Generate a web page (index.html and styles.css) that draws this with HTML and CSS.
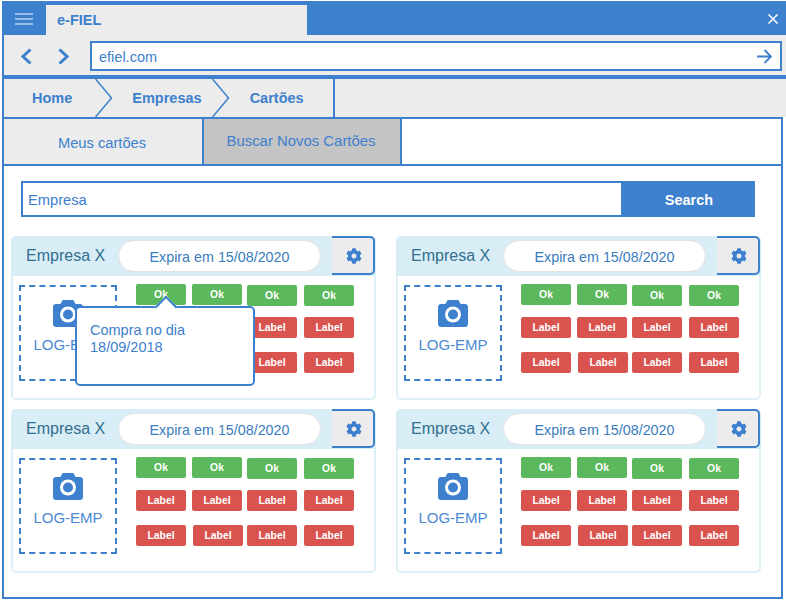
FILE: index.html
```html
<!DOCTYPE html>
<html lang="en">
<head>
    <meta charset="UTF-8">
    <meta name="viewport" content="width=device-width, initial-scale=1.0">
    <title>e-FIEL</title>
    <link rel="stylesheet" href="styles.css">
</head>
<body>
    <svg class="sprites" width="0" height="0">
        <symbol id="gear" viewBox="0 0 512 512">
            <path d="M487.4 315.7l-42.6-24.6c4.3-23.2 4.3-47 0-70.2l42.6-24.6c4.9-2.8 7.1-8.6 5.5-14-11.1-35.6-30-67.8-54.7-94.6-3.8-4.1-10-5.1-14.8-2.3L380.8 110c-17.9-15.4-38.5-27.3-60.8-35.1V25.8c0-5.6-3.9-10.5-9.4-11.7-36.7-8.2-74.3-7.8-109.2 0-5.5 1.2-9.4 6.1-9.4 11.7V75c-22.2 7.9-42.8 19.8-60.8 35.1L88.7 85.5c-4.9-2.8-11-1.9-14.8 2.3-24.7 26.7-43.6 58.9-54.7 94.6-1.7 5.4.6 11.2 5.5 14L67.3 221c-4.3 23.2-4.3 47 0 70.2l-42.6 24.6c-4.9 2.8-7.1 8.6-5.5 14 11.1 35.6 30 67.8 54.7 94.6 3.8 4.1 10 5.1 14.8 2.3l42.6-24.6c17.9 15.4 38.5 27.3 60.8 35.1v49.2c0 5.6 3.9 10.5 9.4 11.7 36.7 8.2 74.3 7.8 109.2 0 5.5-1.2 9.4-6.1 9.4-11.7v-49.2c22.2-7.9 42.8-19.8 60.8-35.1l42.6 24.6c4.9 2.8 11 1.9 14.8-2.3 24.7-26.7 43.6-58.9 54.7-94.6 1.5-5.5-.7-11.3-5.6-14.1zM256 336c-44.1 0-80-35.9-80-80s35.9-80 80-80 80 35.9 80 80-35.9 80-80 80z"/>
        </symbol>
        <symbol id="camera" viewBox="0 0 30 27">
            <path d="M3 4h4.5l1.2-2.6C9.2.5 10 0 11 0h8c1 0 1.8.5 2.3 1.4L22.500 4H27c1.700 0 3 1.300 3 3v17c0 1.700-1.300 3-3 3H3c-1.700 0-3-1.300-3-3V7c0-1.700 1.300-3 3-3z"/>
            <circle cx="15" cy="14.500" r="8" fill="#fff"/>
            <circle cx="15" cy="14.500" r="5"/>
        </symbol>
    </svg>

    <div class="window">
        <div class="titlebar">
            <svg class="menu-icon" width="18" height="14" viewBox="0 0 18 14">
                <path d="M0 2h18M0 7h18M0 12h18" stroke="#b5cfee" stroke-width="1.500" fill="none"/>
            </svg>
            <div class="app-tab">e-FIEL</div>
            <svg class="close-icon" width="10" height="10" viewBox="0 0 10 10">
                <path d="M0.500 0.500l9 9M9.500 0.500l-9 9" stroke="#fff" stroke-width="1.500" fill="none"/>
            </svg>
        </div>

        <div class="addressbar">
            <svg class="nav-icon" width="11" height="17" viewBox="0 0 11 17">
                <path d="M9.500 1.500L2 8.500l7.500 7" stroke="#3d80ce" stroke-width="3" fill="none"/>
            </svg>
            <svg class="nav-icon" width="11" height="17" viewBox="0 0 11 17">
                <path d="M1.500 1.500L9 8.500l-7.500 7" stroke="#3d80ce" stroke-width="3" fill="none"/>
            </svg>
            <div class="url">
                <span>efiel.com</span>
                <svg width="15" height="15" viewBox="0 0 15 15">
                    <path d="M0 7.500h14M7.500 1l6.500 6.500L7.500 14" stroke="#3d80ce" stroke-width="1.800" fill="none"/>
                </svg>
            </div>
        </div>

        <nav class="crumbs">
            <a class="crumb crumb-home">Home</a>
            <svg class="crumb-sep" width="18" height="38" viewBox="0 0 18 38">
                <path d="M0.500 0l16 19-16 19" stroke="#3d80ce" stroke-width="1.500" fill="none"/>
            </svg>
            <a class="crumb crumb-mid">Empresas</a>
            <svg class="crumb-sep" width="18" height="38" viewBox="0 0 18 38">
                <path d="M0.500 0l16 19-16 19" stroke="#3d80ce" stroke-width="1.500" fill="none"/>
            </svg>
            <a class="crumb crumb-last">Cartões</a>
        </nav>

        <div class="frame">
            <div class="tabs">
                <div class="tab">Meus cartões</div>
                <div class="tab tab-active">Buscar Novos Cartões</div>
            </div>

            <div class="search">
                <div class="search-input">Empresa</div>
                <div class="search-btn">Search</div>
            </div>

            <div class="cards">
                <div class="card">
                    <div class="card-head">
                        <span class="company">Empresa X</span>
                        <span class="expires">Expira em 15/08/2020</span>
                        <span class="gear"><svg width="16" height="16"><use href="#gear"/></svg></span>
                    </div>
                    <div class="card-body">
                        <div class="logo">
                            <svg width="30" height="27"><use href="#camera"/></svg>
                            <span>LOG-EMP</span>
                        </div>
                        <div class="labels">
                            <span class="label ok up">Ok</span><span class="label ok up">Ok</span><span class="label ok">Ok</span><span class="label ok">Ok</span>
                            <span class="label bad">Label</span><span class="label bad">Label</span><span class="label bad">Label</span><span class="label bad">Label</span>
                            <span class="label bad">Label</span><span class="label bad nudge">Label</span><span class="label bad">Label</span><span class="label bad">Label</span>
                        </div>
                    </div>
                    <div class="tooltip">Compra no dia<br>18/09/2018</div>
                </div>

                <div class="card">
                    <div class="card-head">
                        <span class="company">Empresa X</span>
                        <span class="expires">Expira em 15/08/2020</span>
                        <span class="gear"><svg width="16" height="16"><use href="#gear"/></svg></span>
                    </div>
                    <div class="card-body">
                        <div class="logo">
                            <svg width="30" height="27"><use href="#camera"/></svg>
                            <span>LOG-EMP</span>
                        </div>
                        <div class="labels">
                            <span class="label ok up">Ok</span><span class="label ok up">Ok</span><span class="label ok">Ok</span><span class="label ok">Ok</span>
                            <span class="label bad">Label</span><span class="label bad">Label</span><span class="label bad">Label</span><span class="label bad">Label</span>
                            <span class="label bad">Label</span><span class="label bad nudge">Label</span><span class="label bad">Label</span><span class="label bad">Label</span>
                        </div>
                    </div>
                </div>

                <div class="card">
                    <div class="card-head">
                        <span class="company">Empresa X</span>
                        <span class="expires">Expira em 15/08/2020</span>
                        <span class="gear"><svg width="16" height="16"><use href="#gear"/></svg></span>
                    </div>
                    <div class="card-body">
                        <div class="logo">
                            <svg width="30" height="27"><use href="#camera"/></svg>
                            <span>LOG-EMP</span>
                        </div>
                        <div class="labels">
                            <span class="label ok up">Ok</span><span class="label ok up">Ok</span><span class="label ok">Ok</span><span class="label ok">Ok</span>
                            <span class="label bad">Label</span><span class="label bad">Label</span><span class="label bad">Label</span><span class="label bad">Label</span>
                            <span class="label bad">Label</span><span class="label bad nudge">Label</span><span class="label bad">Label</span><span class="label bad">Label</span>
                        </div>
                    </div>
                </div>

                <div class="card">
                    <div class="card-head">
                        <span class="company">Empresa X</span>
                        <span class="expires">Expira em 15/08/2020</span>
                        <span class="gear"><svg width="16" height="16"><use href="#gear"/></svg></span>
                    </div>
                    <div class="card-body">
                        <div class="logo">
                            <svg width="30" height="27"><use href="#camera"/></svg>
                            <span>LOG-EMP</span>
                        </div>
                        <div class="labels">
                            <span class="label ok up">Ok</span><span class="label ok up">Ok</span><span class="label ok">Ok</span><span class="label ok">Ok</span>
                            <span class="label bad">Label</span><span class="label bad">Label</span><span class="label bad">Label</span><span class="label bad">Label</span>
                            <span class="label bad">Label</span><span class="label bad nudge">Label</span><span class="label bad">Label</span><span class="label bad">Label</span>
                        </div>
                    </div>
                </div>
            </div>
        </div>
    </div>
</body>
</html>
```

FILE: styles.css
```css
* {
    box-sizing: border-box;
}
html, body {
    height: 100%;
}
body {
    font-family: "Liberation Sans", Arial, sans-serif;
    font-size: 14.5px;
    margin: 0;
    color: #3d80ce;
    background: #fff;
    overflow: hidden;
}
.sprites {
    display: block;
    height: 0;
}
.window {
    display: flex;
    flex-direction: column;
    height: 598px;
    margin: 1px 0 0 2px;
    border-left: 2px solid #3d80ce;
}

/* top bar */
.titlebar {
    display: flex;
    align-items: flex-end;
    height: 34px;
    margin-left: -2px;
    background: #3d80ce;
}
.menu-icon {
    align-self: flex-start;
    margin: 11px 13px 0 13px;
}
.app-tab {
    width: 261px;
    height: 30px;
    padding-left: 11px;
    line-height: 30px;
    font-weight: bold;
    background: #ececec;
}
.close-icon {
    align-self: flex-start;
    margin: 13px 0 0 461px;
}
.addressbar {
    display: flex;
    align-items: center;
    height: 44px;
    padding: 2px 4px 0 17px;
    background: #ececec;
    border-bottom: 4px solid #3d80ce;
}
.nav-icon {
    margin-right: 26px;
}
.nav-icon + .nav-icon {
    margin-right: 21px;
}
.url {
    display: flex;
    flex: 1;
    align-items: center;
    justify-content: space-between;
    height: 30px;
    padding: 0 8px 0 7px;
    background: #fff;
    border: 2px solid #3d80ce;
}
.url span {
    padding-top: 1px;
}

/* breadcrumb */
.crumbs {
    display: flex;
    height: 38px;
    background: #ececec;
}
.crumb {
    font-weight: bold;
    line-height: 38px;
}
.crumb-home {
    padding: 0 23px 0 28px;
}
.crumb-mid {
    padding: 0 10px 0 19px;
}
.crumb-last {
    padding: 0 29px 0 20px;
    border-right: 2px solid #3d80ce;
}
.crumb-sep {
    flex: none;
}

/* main frame */
.frame {
    flex: 1;
    margin-right: 3px;
    border-top: 2px solid #3d80ce;
    border-right: 2px solid #3d80ce;
    border-bottom: 2px solid #3d80ce;
}
.tabs {
    display: flex;
    height: 47px;
    border-bottom: 2px solid #3d80ce;
}
.tab {
    width: 200px;
    padding: 1px 2px 0 0;
    font-size: 14.7px;
    line-height: 46px;
    text-align: center;
    background: #ececec;
    border-right: 2px solid #3d80ce;
}
.tab-active {
    width: 198px;
    padding: 0 2px 0 0;
    line-height: 45px;
    font-size: 14.9px;
    background: #c4c4c4;
}

.search {
    display: flex;
    width: 734px;
    height: 36px;
    margin: 15px 0 19px 17px;
    border: 2px solid #3d80ce;
}
.search-input {
    flex: 1;
    padding-left: 5px;
    font-size: 14.7px;
    line-height: 34px;
}
.search-btn {
    width: 134px;
    margin: -2px -2px -2px 0;
    padding-left: 2px;
    color: #fff;
    font-weight: bold;
    line-height: 38px;
    text-align: center;
    background: #3d80ce;
}

/* cards */
.cards {
    display: grid;
    grid-template-columns: 365px 365px;
    grid-auto-rows: 164px;
    column-gap: 20px;
    row-gap: 9px;
    margin-left: 7px;
}
.card {
    position: relative;
    border: 2px solid #ddf0f8;
    border-radius: 5px;
}
.card-head {
    display: flex;
    align-items: center;
    height: 40px;
    margin: -2px -2px 0;
    padding-left: 15px;
    background: #d9edf7;
    border-radius: 5px 5px 0 0;
}
.company {
    width: 92px;
    font-size: 16px;
    color: #31708f;
}
.expires {
    width: 203px;
    height: 32px;
    margin-right: 11px;
    font-size: 14.3px;
    line-height: 33px;
    text-align: center;
    color: #3a7cbd;
    background: #fff;
    border: 1px solid #e2e2e2;
    border-radius: 16px;
}
.gear {
    display: flex;
    align-items: center;
    justify-content: center;
    width: 43px;
    height: 39px;
    margin-bottom: 1px;
    padding-left: 2px;
    background: #ececec;
    border: 2px solid #3d80ce;
    border-left: 0;
    border-radius: 0 5px 5px 0;
}
.gear svg, .logo svg {
    fill: #3d80ce;
}
.card-body {
    display: flex;
    padding: 9px 0 0 6px;
}
.logo {
    display: flex;
    flex-direction: column;
    align-items: center;
    width: 98px;
    height: 96px;
    padding-top: 13px;
    margin-right: 19px;
    border: 2px dashed #3d80ce;
}
.logo span {
    margin-top: 9px;
    font-size: 15px;
    color: #4a8ad4;
}
.labels {
    display: grid;
    grid-template-columns: 56px 55px 57px 50px;
    grid-template-rows: 32px 35px 21px;
}
.label {
    width: 50px;
    height: 21px;
    font-size: 10.4px;
    font-weight: bold;
    line-height: 22px;
    text-align: center;
    color: #fff;
    border-radius: 2px;
}
.ok {
    background: #5cb85c;
}
.bad {
    background: #d9534f;
}
.up {
    margin-top: -1px;
}
.nudge {
    margin-left: 1px;
}

/* popover over the first card */
.tooltip {
    position: absolute;
    top: 68px;
    left: 62px;
    width: 180px;
    height: 80px;
    padding: 14px 13px 0;
    line-height: 17px;
    background: #fff;
    border: 2px solid #3d80ce;
    border-radius: 5px;
}
.tooltip::before {
    content: "";
    position: absolute;
    top: -9px;
    left: 81px;
    width: 14px;
    height: 14px;
    background: #fff;
    border-top: 2px solid #3d80ce;
    border-left: 2px solid #3d80ce;
    transform: rotate(45deg);
}
```
